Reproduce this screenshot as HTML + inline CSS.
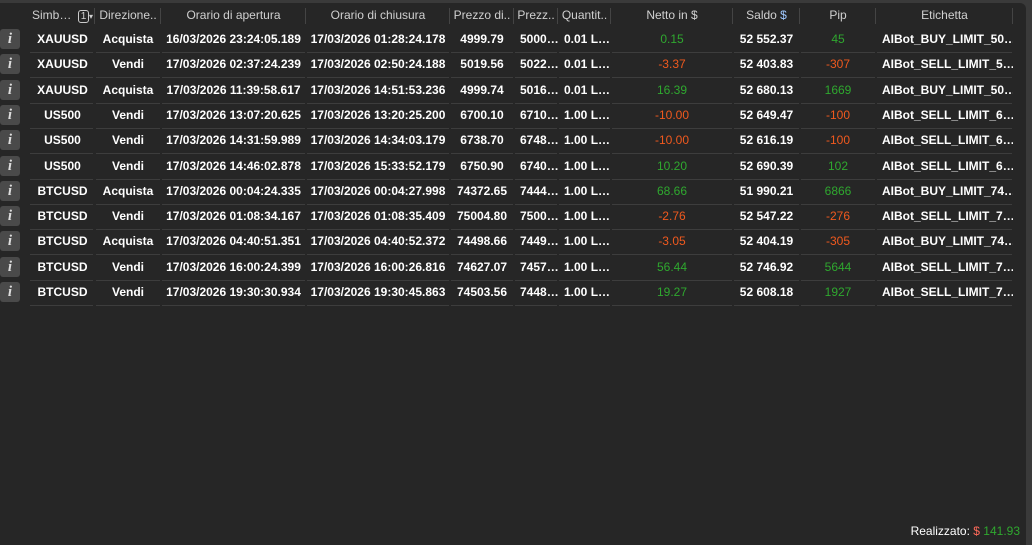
<!DOCTYPE html>
<html><head><meta charset="utf-8"><style>
*{margin:0;padding:0;box-sizing:border-box}
body{width:1032px;height:545px;background:#3a3a3a;overflow:hidden;font-family:"Liberation Sans",Arial,sans-serif;font-size:12px;position:relative}
#panel{position:absolute;left:0;top:3px;width:1026px;height:542px;background:#262626;border-top-right-radius:6px}
.c{position:absolute;white-space:nowrap;overflow:hidden}
.h{color:#d0d0d0;top:3px;height:25px;line-height:25px;text-align:center}
.sep{position:absolute;top:8px;width:1px;height:16px;background:#444}
.r{color:#fff;font-weight:bold;height:25px;line-height:25px;text-align:center}
.n{font-weight:normal}
.line{position:absolute;height:1px;background:#3d3d3d}
.ic{position:absolute;left:0;width:20px;height:20px;background:#4a4a4a;border-radius:3px;color:#ddd;font:italic bold 15px "Liberation Serif",serif;text-align:center;line-height:20px}
.g{color:#2fa82f}.o{color:#f0591e}
.L{text-align:left;padding-left:6px}
</style></head><body><div id="panel"></div>
<div id="t"></div>
<script>
var cols=[[30,65],[95,66],[161,145],[306,144],[450,64],[514,44],[558,53],[611,122],[733,67],[800,76],[876,137]];
var hd=['Simb…','Direzione..','Orario di apertura','Orario di chiusura','Prezzo di..','Prezz..','Quantit..','Netto in $','Saldo $','Pip','Etichetta'];
var rows=[
['XAUUSD','Acquista','16/03/2026 23:24:05.189','17/03/2026 01:28:24.178','4999.79','5000…','0.01 L…','0.15','52 552.37','45','AIBot_BUY_LIMIT_50…'],
['XAUUSD','Vendi','17/03/2026 02:37:24.239','17/03/2026 02:50:24.188','5019.56','5022…','0.01 L…','-3.37','52 403.83','-307','AIBot_SELL_LIMIT_5…'],
['XAUUSD','Acquista','17/03/2026 11:39:58.617','17/03/2026 14:51:53.236','4999.74','5016…','0.01 L…','16.39','52 680.13','1669','AIBot_BUY_LIMIT_50…'],
['US500','Vendi','17/03/2026 13:07:20.625','17/03/2026 13:20:25.200','6700.10','6710…','1.00 L…','-10.00','52 649.47','-100','AIBot_SELL_LIMIT_6…'],
['US500','Vendi','17/03/2026 14:31:59.989','17/03/2026 14:34:03.179','6738.70','6748…','1.00 L…','-10.00','52 616.19','-100','AIBot_SELL_LIMIT_6…'],
['US500','Vendi','17/03/2026 14:46:02.878','17/03/2026 15:33:52.179','6750.90','6740…','1.00 L…','10.20','52 690.39','102','AIBot_SELL_LIMIT_6…'],
['BTCUSD','Acquista','17/03/2026 00:04:24.335','17/03/2026 00:04:27.998','74372.65','7444…','1.00 L…','68.66','51 990.21','6866','AIBot_BUY_LIMIT_74…'],
['BTCUSD','Vendi','17/03/2026 01:08:34.167','17/03/2026 01:08:35.409','75004.80','7500…','1.00 L…','-2.76','52 547.22','-276','AIBot_SELL_LIMIT_7…'],
['BTCUSD','Acquista','17/03/2026 04:40:51.351','17/03/2026 04:40:52.372','74498.66','7449…','1.00 L…','-3.05','52 404.19','-305','AIBot_BUY_LIMIT_74…'],
['BTCUSD','Vendi','17/03/2026 16:00:24.399','17/03/2026 16:00:26.816','74627.07','7457…','1.00 L…','56.44','52 746.92','5644','AIBot_SELL_LIMIT_7…'],
['BTCUSD','Vendi','17/03/2026 19:30:30.934','17/03/2026 19:30:45.863','74503.56','7448…','1.00 L…','19.27','52 608.18','1927','AIBot_SELL_LIMIT_7…']];
var h='';
cols.forEach(function(c,i){
 var txt=hd[i];
 if(i==0)txt='Simb…&nbsp;&nbsp;<span style="display:inline-block;border:1px solid #ccc;border-radius:3px;font-size:10px;line-height:11px;width:11px;text-align:center">1</span><span style="font-size:8px">▾</span>';
 if(i==8)txt='Saldo <span style="color:#9fc8ff">$</span>';
 h+='<div class="c h" style="left:'+c[0]+'px;width:'+c[1]+'px">'+txt+'</div>';
 h+='<div class="sep" style="left:'+(c[0]+c[1]-1)+'px"></div>';
});
rows.forEach(function(r,j){
 var y=27+j*25.3;
 h+='<div class="ic" style="top:'+(y+2)+'px">i</div>';
 cols.forEach(function(c,i){
  var cls='c r';
  if(i==5||i==6||i==10)cls+=' L';
  if(i==7||i==9)cls+=(r[i].charAt(0)=='-'?' o':' g');
  if(i==7||i==9)cls+=' n';
  h+='<div class="'+cls+'" style="left:'+c[0]+'px;top:'+y+'px;width:'+c[1]+'px">'+r[i]+'</div>';
  h+='<div class="line" style="left:'+(c[0]+(i==0?0:1))+'px;top:'+(y+25)+'px;width:'+(c[1]-2)+'px"></div>';
 });
});
h+='<div class="c" style="left:860px;top:523px;width:160px;text-align:right;color:#fff;line-height:16px">Realizzato: <span style="color:#ff6a5a">$</span> <span style="color:#2fa82f">141.93</span></div>';
document.getElementById('t').innerHTML=h;
</script>
</body></html>
